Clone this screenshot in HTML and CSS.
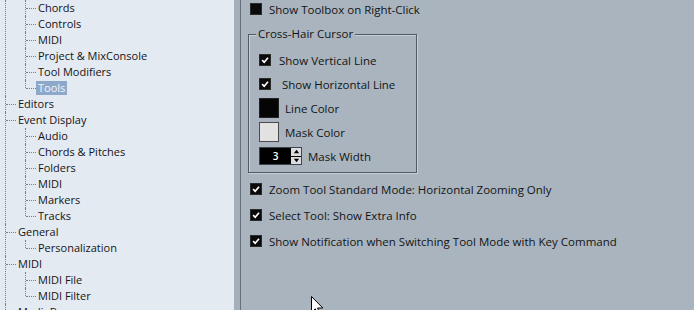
FILE: index.html
```html
<!DOCTYPE html>
<html>
<head>
<meta charset="utf-8">
<link rel="stylesheet" href="styles.css">
</head>
<body>
<div class="app">
  <div class="nav">
    <ul class="tree">
      <li class="n1 cont">
        <ul class="sub">
          <li class="n2"><span class="lbl">Chords</span></li>
          <li class="n2"><span class="lbl">Controls</span></li>
          <li class="n2"><span class="lbl">MIDI</span></li>
          <li class="n2"><span class="lbl">Project &amp; MixConsole</span></li>
          <li class="n2"><span class="lbl">Tool Modifiers</span></li>
          <li class="n2"><span class="lbl sel">Tools</span></li>
        </ul>
      </li>
      <li class="n1"><span class="lbl">Editors</span></li>
      <li class="n1"><span class="lbl">Event Display</span>
        <ul class="sub">
          <li class="n2"><span class="lbl">Audio</span></li>
          <li class="n2"><span class="lbl">Chords &amp; Pitches</span></li>
          <li class="n2"><span class="lbl">Folders</span></li>
          <li class="n2"><span class="lbl">MIDI</span></li>
          <li class="n2"><span class="lbl">Markers</span></li>
          <li class="n2"><span class="lbl">Tracks</span></li>
        </ul>
      </li>
      <li class="n1"><span class="lbl">General</span>
        <ul class="sub">
          <li class="n2"><span class="lbl">Personalization</span></li>
        </ul>
      </li>
      <li class="n1"><span class="lbl">MIDI</span>
        <ul class="sub">
          <li class="n2"><span class="lbl">MIDI File</span></li>
          <li class="n2"><span class="lbl">MIDI Filter</span></li>
        </ul>
      </li>
      <li class="n1"><span class="lbl">MediaBay</span></li>
    </ul>
  </div>
  <div class="split"></div>
  <div class="panel">
    <label class="row top"><span class="cb"></span><span>Show Toolbox on Right-Click</span></label>
    <div class="group">
      <span class="legend">Cross-Hair Cursor</span>
      <label class="grow"><span class="cb on"><svg viewBox="0 0 12 12"><path d="M2.5 6.2 L5 8.6 L9.6 3.2" /></svg></span><span class="t8">Show Vertical Line</span></label>
      <label class="grow"><span class="cb on"><svg viewBox="0 0 12 12"><path d="M2.5 6.2 L5 8.6 L9.6 3.2" /></svg></span><span class="t8 extra">Show Horizontal Line</span></label>
      <div class="grow"><span class="swatch black"></span><span class="t6">Line Color</span></div>
      <div class="grow"><span class="swatch light"></span><span class="t6">Mask Color</span></div>
      <div class="grow">
        <span class="spin"><span class="field">3</span><span class="btns"><span class="btn"><svg viewBox="0 0 9 8"><path d="M1.5 6 L4.5 2 L7.5 6 Z"/></svg></span><span class="btn"><svg viewBox="0 0 9 8"><path d="M1.5 2 L4.5 6 L7.5 2 Z"/></svg></span></span></span>
        <span class="t6">Mask Width</span>
      </div>
    </div>
    <div class="list">
      <label class="row"><span class="cb on"><svg viewBox="0 0 12 12"><path d="M2.5 6.2 L5 8.6 L9.6 3.2" /></svg></span><span>Zoom Tool Standard Mode: Horizontal Zooming Only</span></label>
      <label class="row"><span class="cb on"><svg viewBox="0 0 12 12"><path d="M2.5 6.2 L5 8.6 L9.6 3.2" /></svg></span><span>Select Tool: Show Extra Info</span></label>
      <label class="row"><span class="cb on"><svg viewBox="0 0 12 12"><path d="M2.5 6.2 L5 8.6 L9.6 3.2" /></svg></span><span>Show Notification when Switching Tool Mode with Key Command</span></label>
    </div>
    <svg class="cursor" width="13" height="20" viewBox="0 0 13 20"><path d="M0.5 0.5 L0.5 16.5 L4.3 12.8 L6.8 18.6 L9 17.6 L6.6 12 L11.8 12 Z" fill="#fff" stroke="#000" stroke-width="1"/></svg>
  </div>
</div>
</body>
</html>
```
FILE: styles.css
```css
html, body {
  margin: 0;
  padding: 0;
}
body {
  width: 694px;
  height: 310px;
  overflow: hidden;
  font-family: "Open Sans", "Noto Sans", sans-serif;
  font-size: 11px;
  color: #141414;
}
.app {
  display: flex;
  height: 310px;
}
.nav {
  width: 234px;
  background: #e4eaf2;
  overflow: hidden;
  flex: none;
}
.split {
  width: 6px;
  flex: none;
  background: #a5afb9;
  border-right: 1px solid #66717c;
}
.panel {
  flex: 1;
  background: #a9b4bf;
  position: relative;
  padding-left: 9px;
  font-size: 11.5px;
}

/* tree */
.tree, .sub {
  list-style: none;
  margin: 0;
  padding: 0;
}
.lbl {
  display: inline-block;
  height: 16px;
  line-height: 15px;
  padding: 0 2px;
  white-space: nowrap;
}
.lbl.sel {
  background: #8ea8ca;
  color: #f4f6f9;
  height: 14px;
  line-height: 13px;
  margin-top: 1px;
  margin-bottom: 1px;
  vertical-align: top;
}
.n1 {
  position: relative;
  padding-left: 16px;
}
.n1::before {
  content: "";
  position: absolute;
  left: 6px;
  top: 8px;
  width: 10px;
  border-top: 1px dotted #7d7d7d;
}
.n1.cont::before {
  display: none;
}
.n1::after {
  content: "";
  position: absolute;
  left: 5px;
  top: 0;
  bottom: 0;
  border-left: 1px dotted #7d7d7d;
}
.sub {
  margin-left: 2px;
}
.n2 {
  position: relative;
  padding-left: 18px;
}
.n2::before {
  content: "";
  position: absolute;
  left: 8px;
  top: 8px;
  width: 10px;
  border-top: 1px dotted #7d7d7d;
}
.n2::after {
  content: "";
  position: absolute;
  left: 7px;
  top: 0;
  bottom: 0;
  border-left: 1px dotted #7d7d7d;
}
.n2:last-child::after {
  bottom: auto;
  height: 8px;
}

/* panel */
.row {
  display: flex;
  align-items: center;
  height: 26px;
  gap: 7px;
  white-space: nowrap;
}
.row.top {
  height: 20px;
  margin-top: -1px;
}
.cb {
  width: 12px;
  height: 12px;
  flex: none;
  background: #0a0a0a;
  box-sizing: border-box;
  border: 1px solid #2a2a2a;
  display: flex;
  align-items: center;
  justify-content: center;
}
.cb svg {
  width: 12px;
  height: 12px;
  fill: none;
  stroke: #fff;
  stroke-width: 2;
}
.group {
  position: relative;
  margin-top: 15px;
  margin-left: -2px;
  width: 169px;
  box-sizing: border-box;
  border: 1px solid #505a64;
  box-shadow: 1px 1px 0 #c8cfd6, inset 1px 1px 0 #c8cfd6;
  padding: 13px 0 4px 10px;
}
.legend {
  position: absolute;
  top: -9px;
  left: 7px;
  background: #a9b4bf;
  padding: 0 2px;
  line-height: 16px;
}
.grow {
  display: flex;
  align-items: center;
  height: 24px;
  white-space: nowrap;
}
.t8 { margin-left: 8px; }
.t8.extra { margin-left: 11px; }
.t6 { margin-left: 6px; }
.swatch {
  width: 20px;
  height: 20px;
  box-sizing: border-box;
  flex: none;
}
.swatch.black {
  background: #050505;
  border: 1px solid #222;
}
.swatch.light {
  background: #e2e2e2;
  border: 1px solid #4a4a4a;
}
.spin {
  display: flex;
  height: 18px;
  width: 43px;
  box-sizing: border-box;
  border: 1px solid #3c4650;
  flex: none;
}
.field {
  flex: 1;
  background: #000;
  color: #fff;
  text-align: center;
  line-height: 16px;
  font-size: 10px;
  font-weight: 600;
}
.btns {
  display: flex;
  flex-direction: column;
  width: 10px;
  background: #000;
  gap: 1px;
}
.btn {
  flex: 1;
  background: #dcdcdc;
  display: flex;
  align-items: center;
  justify-content: center;
}
.btn svg {
  width: 9px;
  height: 7px;
  fill: #000;
}
.list {
  margin-top: 3px;
}
.cursor {
  position: absolute;
  left: 70px;
  top: 296px;
}
```
